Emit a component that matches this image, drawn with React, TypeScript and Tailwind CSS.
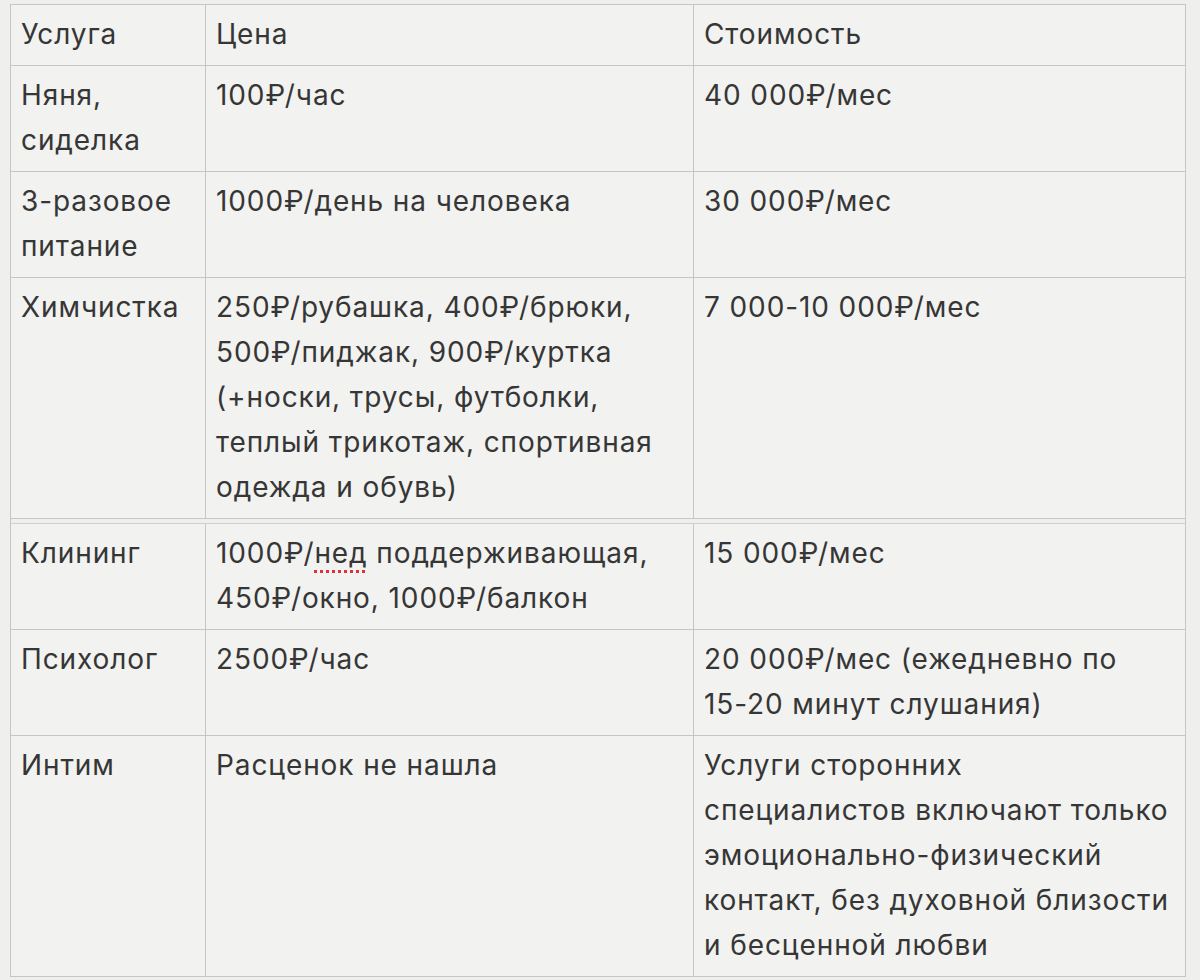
import React from "react";

type Row = { a: string[]; b: React.ReactNode[]; c: string[]; gapAfter?: boolean };

const rows: Row[] = [
  { a: ["Няня,", "сиделка"], b: ["100₽/час"], c: ["40 000₽/мес"] },
  { a: ["3-разовое", "питание"], b: ["1000₽/день на человека"], c: ["30 000₽/мес"] },
  {
    a: ["Химчистка"],
    b: [
      "250₽/рубашка, 400₽/брюки,",
      "500₽/пиджак, 900₽/куртка",
      "(+носки, трусы, футболки,",
      "теплый трикотаж, спортивная",
      "одежда и обувь)",
    ],
    c: ["7 000-10 000₽/мес"],
    gapAfter: true,
  },
  {
    a: ["Клининг"],
    b: [
      <>
        1000₽/
        <span className="underline decoration-dotted decoration-[#e0323a] decoration-[3px] underline-offset-[7px]">нед</span>{" "}
        поддерживающая,
      </>,
      "450₽/окно, 1000₽/балкон",
    ],
    c: ["15 000₽/мес"],
  },
  { a: ["Психолог"], b: ["2500₽/час"], c: ["20 000₽/мес (ежедневно по", "15-20 минут слушания)"] },
  {
    a: ["Интим"],
    b: ["Расценок не нашла"],
    c: [
      "Услуги сторонних",
      "специалистов включают только",
      "эмоционально-физический",
      "контакт, без духовной близости",
      "и бесценной любви",
    ],
  },
];

const Cell = ({ lines, w, last }: { lines: React.ReactNode[]; w: string; last?: boolean }) => (
  <div className={`${w} ${last ? "" : "border-r border-[#c6c6c4]"} px-[10px] pt-[7px] pb-[8px]`}>
    {lines.map((l, i) => (
      <div key={i} className="whitespace-nowrap">
        {l}
      </div>
    ))}
  </div>
);

export default function App() {
  return (
    <div
      className="w-[1200px] h-[980px] bg-[#efefed] pt-[4px] pl-[10px] text-[28px] leading-[45px] tracking-[0.9px] text-[#363636] overflow-hidden"
      style={{ fontFamily: "Inter, Roboto, 'Noto Sans', sans-serif" }}
    >
      <div className="w-[1176px] border border-[#c6c6c4] bg-[#f2f2f0]">
        <div className="flex border-b border-[#c6c6c4]">
          <Cell w="w-[195px]" lines={["Услуга"]} />
          <Cell w="w-[488px]" lines={["Цена"]} />
          <Cell w="flex-1" lines={["Стоимость"]} last />
        </div>
        {rows.map((r, i) => (
          <div
            key={i}
            className={`flex ${i < rows.length - 1 ? "border-b border-[#c6c6c4]" : ""} ${r.gapAfter ? "mb-[5px] shadow-[0_1px_0_0_#efefed,0_2px_0_0_#efefed,0_3px_0_0_#efefed,0_4px_0_0_#efefed,0_5px_0_0_#d0d0ce]" : ""}`}
          >
            <Cell w="w-[195px]" lines={r.a} />
            <Cell w="w-[488px]" lines={r.b} />
            <Cell w="flex-1" lines={r.c} last />
          </div>
        ))}
      </div>
    </div>
  );
}
